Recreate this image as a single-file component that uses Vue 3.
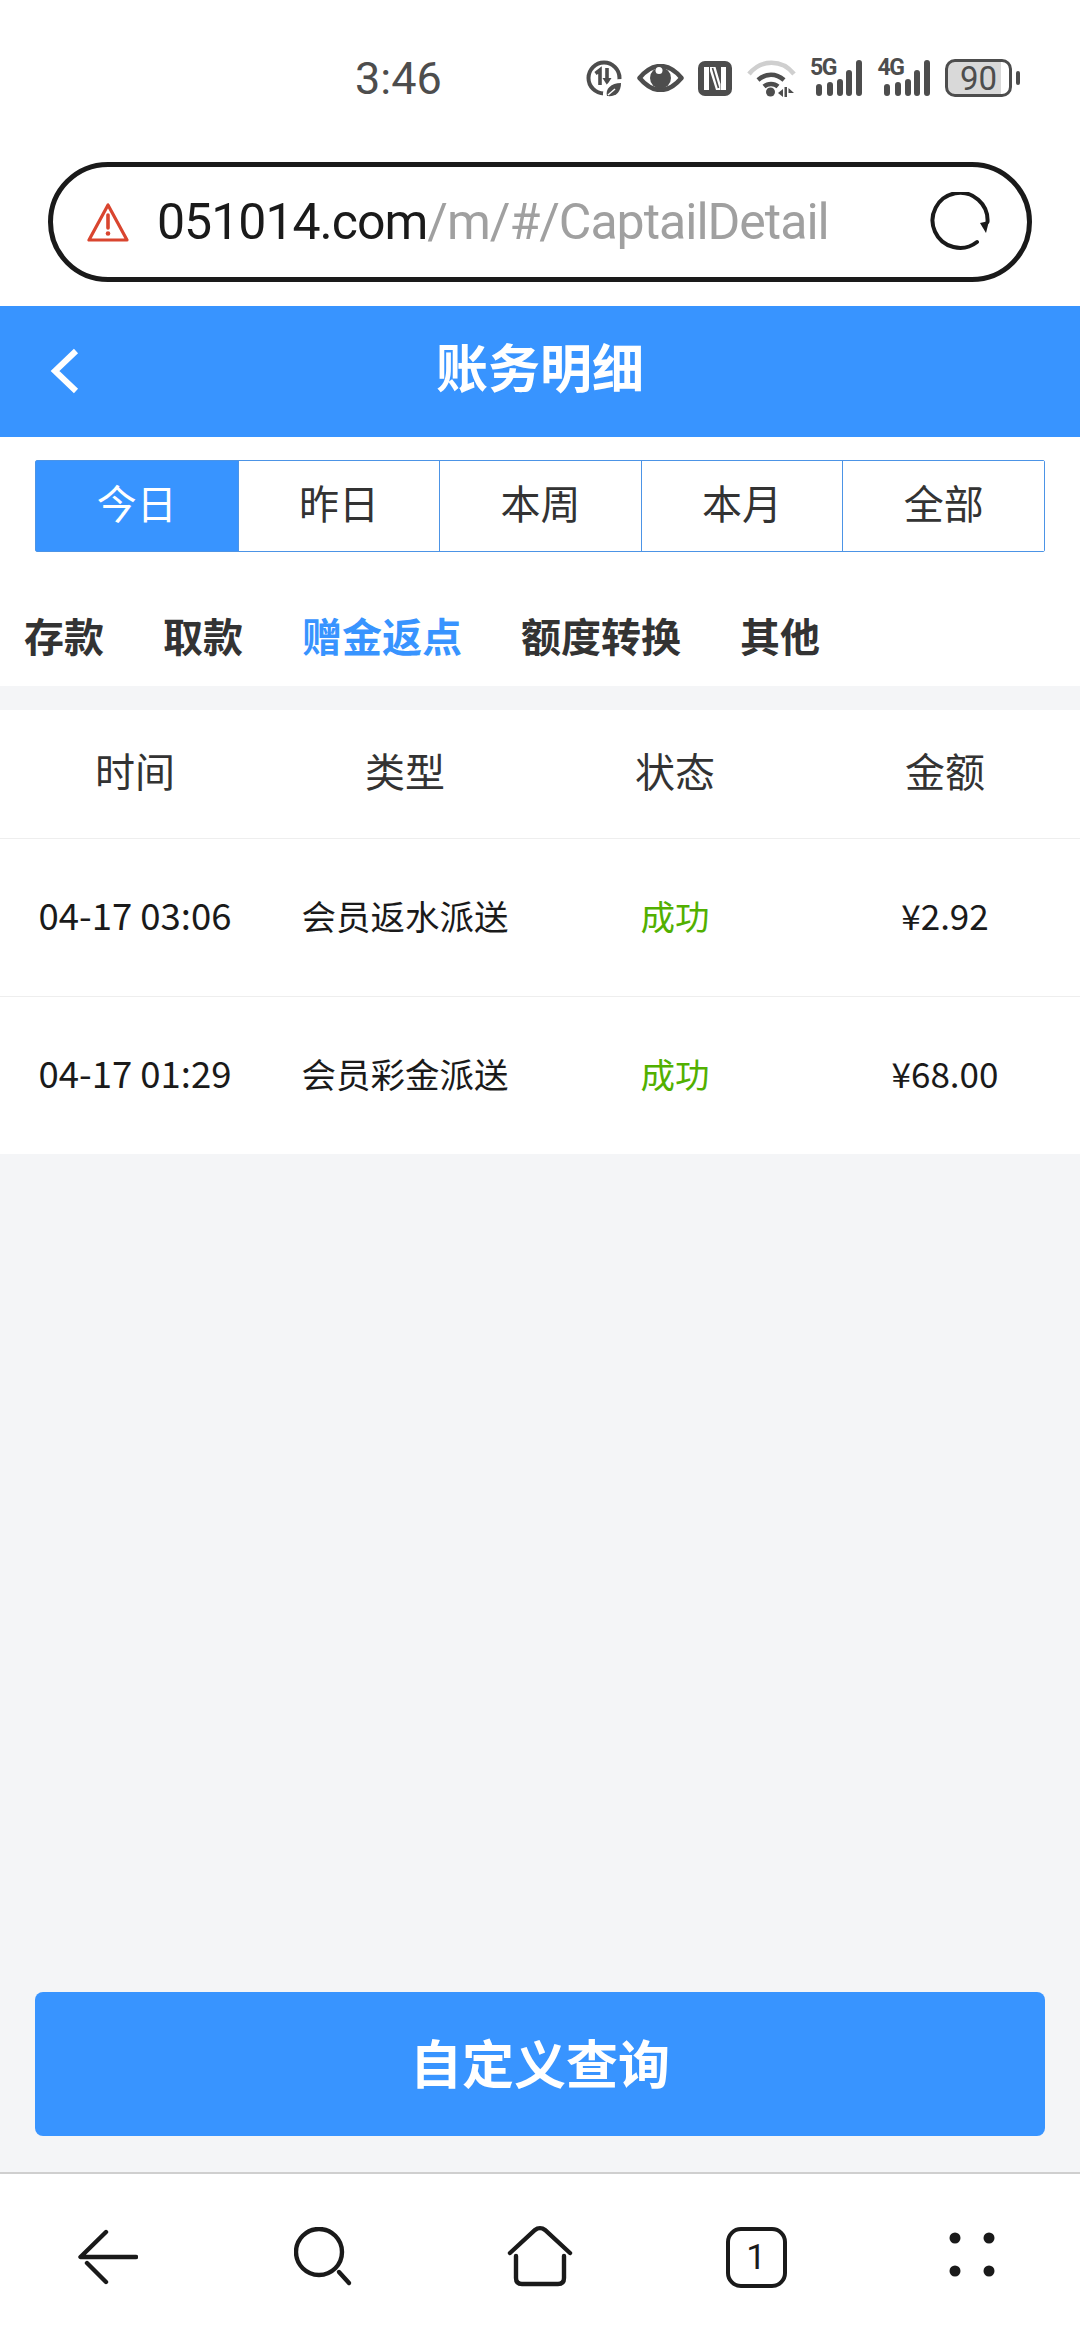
<template>
  <div class="page">
    <div class="status-bar">
      <span class="clock">3:46</span>
      <div class="status-icons">
        <svg width="36" height="37" viewBox="0 0 36 37">
          <circle cx="18" cy="18" r="15.500" fill="none" stroke="#4d4d4d" stroke-width="4" />
          <path d="M9.500 13.500l4.500-3.500v15" fill="none" stroke="#4d4d4d" stroke-width="3.600" />
          <path d="M21 8v12" stroke="#4d4d4d" stroke-width="3.600" />
          <path d="M16.500 18h9l-4.500 7z" fill="#4d4d4d" />
          <path d="M17 37c-1-11 6-18 19-18v18z" fill="#fff" />
          <path d="M21 36c-2-7 4-13 14-13 0 9-5 14-14 13z" fill="#4d4d4d" />
          <path d="M22 35l7-6" stroke="#fff" stroke-width="1.500" />
        </svg>
        <svg width="47" height="28" viewBox="0 0 47 28">
          <path d="M2.500 14C10 5 16 2 23.500 2S37 5 44.500 14C37 23 31 26 23.500 26S10 23 2.500 14z" fill="none" stroke="#4d4d4d" stroke-width="4.500" stroke-linejoin="round" />
          <circle cx="23.500" cy="14" r="10.500" fill="#4d4d4d" />
          <circle cx="22" cy="6.500" r="3.500" fill="#fff" />
        </svg>
        <svg width="34" height="35" viewBox="0 0 34 35">
          <rect width="34" height="35" rx="7" fill="#4d4d4d" />
          <path d="M6 6h5v23H6zM23 6h5v23h-5zM12 6h5.500l5 17v6h-4.500l-6-19z" fill="#fff" />
          <path d="M14.500 7l6 20" stroke="#4d4d4d" stroke-width="1.600" />
        </svg>
        <svg width="49" height="37" viewBox="0 0 49 37">
          <path d="M2 14C14 -1 35 -1 47 14" fill="none" stroke="#cfcfcf" stroke-width="4.500" />
          <path d="M11 20c8-7 18-7 26 0M17 26.500c4-3.500 10-3.500 14 0" fill="none" stroke="#4d4d4d" stroke-width="4.500" />
          <circle cx="23.500" cy="32" r="4.500" fill="#4d4d4d" />
          <path d="M31 33l5-4v8zM37.500 27h2.500v10h-2.500zM41.500 28l5.500 5h-5.500z" fill="#4d4d4d" />
        </svg>
        <div v-for="n in networks" :key="n" class="signal">
          <span class="net">{{ n }}</span>
          <svg width="53" height="36" viewBox="0 0 53 36">
            <path d="M9 27v6M20 25v8M30 22v11M39 13v20M49 3v30" fill="none" stroke="#4d4d4d" stroke-width="6" stroke-linecap="round" />
          </svg>
        </div>
        <div class="battery">
          <div class="battery-body"><span>90</span></div>
          <i class="battery-nub"></i>
        </div>
      </div>
    </div>

    <div class="browser-bar">
      <div class="url-box">
        <svg width="42" height="39" viewBox="0 0 42 39">
          <path d="M21 2L2 37h38z" fill="none" stroke="#d9452f" stroke-width="3.200" stroke-linejoin="round" />
          <path d="M21 12v13" stroke="#d9452f" stroke-width="3.600" stroke-linecap="round" />
          <circle cx="21" cy="30.500" r="2.300" fill="#d9452f" />
        </svg>
        <div class="url"><span class="host">051014.com</span><span class="path">/m/#/CaptailDetail</span></div>
        <svg width="60" height="60" viewBox="0 0 60 60">
          <path d="M47 50A27.500 27.500 0 1 1 57.500 30" fill="none" stroke="#1a1a1a" stroke-width="4" stroke-linecap="round" />
          <path d="M50 31l9-2-3 12z" fill="#1a1a1a" />
        </svg>
      </div>
    </div>

    <header class="nav-header">
      <svg class="back" width="34" height="46" viewBox="0 0 34 46">
        <path d="M28 3L7 23l21 20" fill="none" stroke="#fff" stroke-width="6" />
      </svg>
      <h1>账务明细</h1>
    </header>

    <div class="range-tabs">
      <button v-for="(r, i) in ranges" :key="r" type="button" :class="['range', { active: i === 0 }]">{{ r }}</button>
    </div>

    <div class="type-tabs">
      <span v-for="(t, i) in types" :key="t" :class="['type', { active: i === 2 }]">{{ t }}</span>
    </div>

    <main class="content">
      <div class="table">
        <div class="row head">
          <div v-for="h in heads" :key="h" class="cell">{{ h }}</div>
        </div>
        <div v-for="item in records" :key="item.time" class="row">
          <div class="cell time">{{ item.time }}</div>
          <div class="cell">{{ item.kind }}</div>
          <div class="cell ok">{{ item.state }}</div>
          <div class="cell money">{{ item.money }}</div>
        </div>
      </div>
      <button type="button" class="query">自定义查询</button>
    </main>

    <nav class="bottom-bar">
      <div class="nav-cell">
        <svg width="60" height="56" viewBox="0 0 60 56">
          <path d="M28 3L2.500 28H58M9 34l19 19" fill="none" stroke="#1a1a1a" stroke-width="4.400" stroke-linecap="round" stroke-linejoin="round" />
        </svg>
      </div>
      <div class="nav-cell">
        <svg width="60" height="60" viewBox="0 0 60 60">
          <circle cx="25" cy="25" r="23" fill="none" stroke="#1a1a1a" stroke-width="4.400" />
          <path d="M45 45l10 11" stroke="#1a1a1a" stroke-width="4.400" stroke-linecap="round" />
        </svg>
      </div>
      <div class="nav-cell">
        <svg width="66" height="64" viewBox="0 0 66 64">
          <path d="M3 28L28 5c3-2.500 7-2.500 10 0l25 23M9 31v22c0 4 2 6 6 6h36c4 0 6-2 6-6V31" fill="none" stroke="#1a1a1a" stroke-width="4.400" stroke-linecap="round" />
        </svg>
      </div>
      <div class="nav-cell">
        <div class="tab-count">1</div>
      </div>
      <div class="nav-cell">
        <svg class="dots" width="46" height="46" viewBox="0 0 46 46">
          <circle cx="6" cy="6" r="5.500" fill="#1a1a1a" />
          <circle cx="40" cy="6" r="5.500" fill="#1a1a1a" />
          <circle cx="6" cy="39" r="5.500" fill="#1a1a1a" />
          <circle cx="40" cy="39" r="5.500" fill="#1a1a1a" />
        </svg>
      </div>
    </nav>
  </div>
</template>

<script setup>
const networks = ["5G", "4G"];
const ranges = ["今日", "昨日", "本周", "本月", "全部"];
const types = ["存款", "取款", "赠金返点", "额度转换", "其他"];
const heads = ["时间", "类型", "状态", "金额"];
const records = [
  { time: "04-17 03:06", kind: "会员返水派送", state: "成功", money: "¥2.92" },
  { time: "04-17 01:29", kind: "会员彩金派送", state: "成功", money: "¥68.00" },
];
</script>

<style>
html,
body {
  margin: 0;
  background: #fff;
}
</style>

<style scoped>
.page {
  width: 1080px;
  height: 2340px;
  display: flex;
  flex-direction: column;
  background: #fff;
  font-family: "Noto Sans CJK SC", "Noto Sans", sans-serif;
  overflow: hidden;
}

.status-bar {
  height: 162px;
  padding: 59px 60px 0 355px;
  box-sizing: border-box;
  display: flex;
  align-items: flex-start;
  justify-content: space-between;
}
.clock {
  font-family: Roboto, sans-serif;
  font-size: 45px;
  line-height: 40px;
  color: #4d4d4d;
}
.status-icons {
  display: flex;
  align-items: center;
  gap: 14.5px;
  height: 38px;
}
.signal {
  position: relative;
  width: 53px;
  height: 36px;
}
.signal svg {
  display: block;
}
.net {
  position: absolute;
  left: 0;
  top: -2px;
  font-family: Roboto, sans-serif;
  font-size: 23px;
  line-height: 20px;
  font-weight: 700;
  letter-spacing: -1.5px;
  color: #4d4d4d;
}
.battery {
  display: flex;
  align-items: center;
  gap: 4px;
}
.battery-body {
  width: 67px;
  height: 38px;
  box-sizing: border-box;
  border: 3px solid #4d4d4d;
  border-radius: 10px;
  background: linear-gradient(90deg, #d9d9d9 87%, #fff 87%);
  display: flex;
  align-items: center;
  justify-content: center;
  font-family: Roboto, sans-serif;
  font-size: 33px;
  color: #4d4d4d;
}
.battery-nub {
  width: 4px;
  height: 14px;
  border-radius: 2px;
  background: #4d4d4d;
}

.browser-bar {
  height: 144px;
  padding: 0 48px;
  box-sizing: border-box;
}
.url-box {
  height: 120px;
  box-sizing: border-box;
  border: 5px solid #1a1a1a;
  border-radius: 60px;
  padding: 0 37px 0 34px;
  display: flex;
  align-items: center;
  gap: 28px;
}
.url {
  flex: 1;
  font-family: Roboto, sans-serif;
  font-size: 50px;
  letter-spacing: -1px;
  white-space: nowrap;
}
.host {
  color: #1a1a1a;
}
.path {
  color: #a0a0a0;
}

.nav-header {
  position: relative;
  height: 131px;
  background: #3894ff;
  display: flex;
  align-items: center;
  justify-content: center;
}
.nav-header h1 {
  margin: 0;
  padding-bottom: 12px;
  font-size: 52px;
  font-weight: 700;
  color: #fff;
}
.back {
  position: absolute;
  left: 48px;
  top: 42px;
}

.range-tabs {
  margin: 23px 35px 0;
  height: 92px;
  box-sizing: border-box;
  display: grid;
  grid-template-columns: repeat(5, 1fr);
  border: 1px solid #4c94e6;
  border-radius: 2px;
}
.range {
  padding: 0 0 9px;
  border: none;
  border-left: 1px solid #4c94e6;
  background: #fff;
  font-family: inherit;
  font-size: 40px;
  color: #333;
}
.range:first-child {
  border-left: none;
}
.range.active {
  background: #3894ff;
  color: #fff;
}

.type-tabs {
  height: 134px;
  padding: 32px 24px 0;
  display: flex;
  align-items: center;
  gap: 59px;
  font-size: 40px;
  font-weight: 700;
  color: #333;
  box-sizing: border-box;
}
.type.active {
  color: #3894ff;
}

.content {
  flex: 1;
  padding-top: 24px;
  background: #f4f5f7;
  display: flex;
  flex-direction: column;
  justify-content: space-between;
}
.table {
  background: #fff;
}
.row {
  display: grid;
  grid-template-columns: repeat(4, 1fr);
  height: 157px;
  align-items: center;
  border-top: 1px solid #eeeeee;
  font-size: 34.5px;
  color: #1a1a1a;
}
.row .cell {
  padding-bottom: 6px;
}
.row.head {
  height: 128px;
  border-top: none;
  font-size: 40px;
  color: #333;
}
.row.head .cell {
  padding-bottom: 9px;
}
.cell {
  text-align: center;
}
.time {
  font-size: 36.5px;
}
.money {
  font-size: 35px;
}
.ok {
  color: #52b000;
}

.query {
  margin: 0 35px 36px;
  height: 144px;
  padding: 0 0 6px;
  border: none;
  border-radius: 8px;
  background: #3894ff;
  color: #fff;
  font-family: inherit;
  font-size: 52px;
  font-weight: 700;
}

.bottom-bar {
  height: 168px;
  box-sizing: border-box;
  border-top: 2px solid #cfcfcf;
  display: grid;
  grid-template-columns: repeat(5, 1fr);
  align-items: center;
}
.nav-cell {
  display: flex;
  justify-content: center;
}
.dots {
  margin-top: -5px;
}
.tab-count {
  width: 61px;
  height: 61px;
  box-sizing: border-box;
  border: 4.4px solid #1a1a1a;
  border-radius: 15px;
  display: flex;
  align-items: center;
  justify-content: center;
  font-family: Roboto, sans-serif;
  font-weight: 400;
  font-size: 35px;
  color: #1a1a1a;
}
</style>
